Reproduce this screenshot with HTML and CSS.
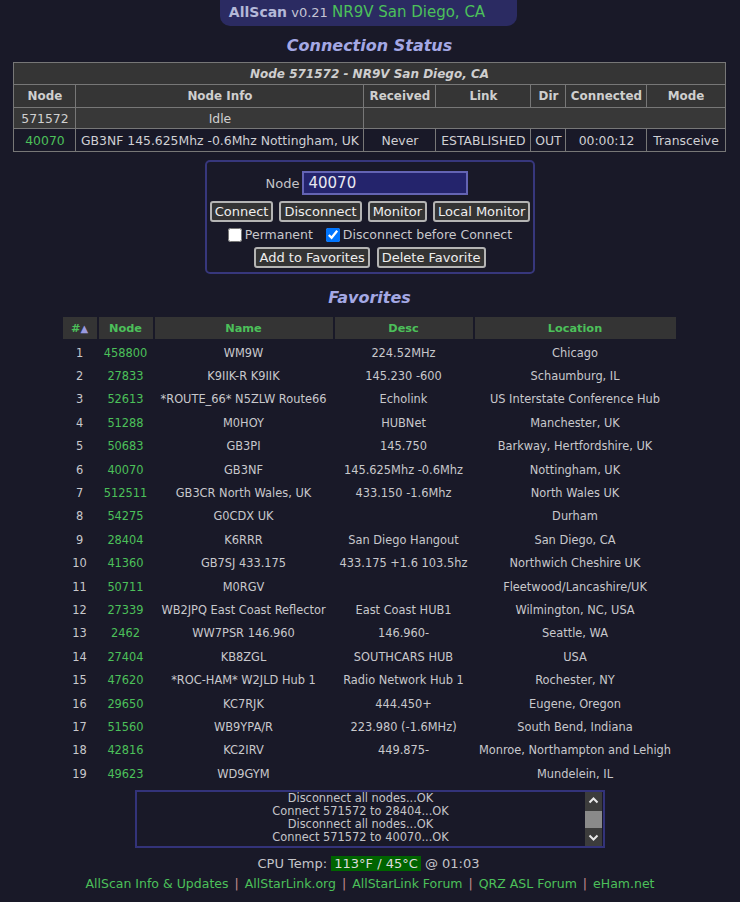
FILE: index.html
```html
<!DOCTYPE html>
<html>
<head>
<meta charset="utf-8">
<link rel="stylesheet" href="styles.css">
</head>
<body>
<div class="page">
  <div class="topbar"><span class="brand">AllScan</span> <span class="ver">v0.21</span> <span class="loc">NR9V San Diego, CA</span></div>
  <h2 class="title">Connection Status</h2>
  <table class="conn">
    <colgroup><col class="c1"><col class="c2"><col class="c3"><col class="c4"><col class="c5"><col class="c6"><col class="c7"></colgroup>
    <tr><th colspan="7" class="conn-title">Node 571572 - NR9V San Diego, CA</th></tr>
    <tr class="hdr"><th>Node</th><th>Node Info</th><th>Received</th><th>Link</th><th>Dir</th><th>Connected</th><th>Mode</th></tr>
    <tr class="self"><td>571572</td><td>Idle</td><td colspan="5"></td></tr>
    <tr class="link"><td class="green">40070</td><td>GB3NF 145.625Mhz -0.6Mhz Nottingham, UK</td><td>Never</td><td>ESTABLISHED</td><td>OUT</td><td>00:00:12</td><td>Transceive</td></tr>
  </table>

  <form class="ctl">
    <div class="row noderow"><label class="nlabel">Node</label><input class="ninput" type="text" value="40070"></div>
    <div class="row btns"><button type="button">Connect</button><button type="button">Disconnect</button><button type="button">Monitor</button><button type="button">Local Monitor</button></div>
    <div class="row checks"><label class="chk"><input type="checkbox">Permanent</label><label class="chk"><input type="checkbox" checked>Disconnect before Connect</label></div>
    <div class="row btns btns2"><button type="button">Add to Favorites</button><button type="button">Delete Favorite</button></div>
  </form>

  <h2 class="title fav-title">Favorites</h2>
  <table class="fav">
    <colgroup><col class="f1"><col class="f2"><col class="f3"><col class="f4"><col class="f5"></colgroup>
    <thead><tr><th>#<span class="tri">▲</span></th><th>Node</th><th>Name</th><th>Desc</th><th>Location</th></tr></thead>
    <tbody>
      <tr><td>1</td><td class="green">458800</td><td>WM9W</td><td>224.52MHz</td><td>Chicago</td></tr>
      <tr><td>2</td><td class="green">27833</td><td>K9IIK-R K9IIK</td><td>145.230 -600</td><td>Schaumburg, IL</td></tr>
      <tr><td>3</td><td class="green">52613</td><td>*ROUTE_66* N5ZLW Route66</td><td>Echolink</td><td>US Interstate Conference Hub</td></tr>
      <tr><td>4</td><td class="green">51288</td><td>M0HOY</td><td>HUBNet</td><td>Manchester, UK</td></tr>
      <tr><td>5</td><td class="green">50683</td><td>GB3PI</td><td>145.750</td><td>Barkway, Hertfordshire, UK</td></tr>
      <tr><td>6</td><td class="green">40070</td><td>GB3NF</td><td>145.625Mhz -0.6Mhz</td><td>Nottingham, UK</td></tr>
      <tr><td>7</td><td class="green">512511</td><td>GB3CR North Wales, UK</td><td>433.150 -1.6Mhz</td><td>North Wales UK</td></tr>
      <tr><td>8</td><td class="green">54275</td><td>G0CDX UK</td><td></td><td>Durham</td></tr>
      <tr><td>9</td><td class="green">28404</td><td>K6RRR</td><td>San Diego Hangout</td><td>San Diego, CA</td></tr>
      <tr><td>10</td><td class="green">41360</td><td>GB7SJ 433.175</td><td>433.175 +1.6 103.5hz</td><td>Northwich Cheshire UK</td></tr>
      <tr><td>11</td><td class="green">50711</td><td>M0RGV</td><td></td><td>Fleetwood/Lancashire/UK</td></tr>
      <tr><td>12</td><td class="green">27339</td><td>WB2JPQ East Coast Reflector</td><td>East Coast HUB1</td><td>Wilmington, NC, USA</td></tr>
      <tr><td>13</td><td class="green">2462</td><td>WW7PSR 146.960</td><td>146.960-</td><td>Seattle, WA</td></tr>
      <tr><td>14</td><td class="green">27404</td><td>KB8ZGL</td><td>SOUTHCARS HUB</td><td>USA</td></tr>
      <tr><td>15</td><td class="green">47620</td><td>*ROC-HAM* W2JLD Hub 1</td><td>Radio Network Hub 1</td><td>Rochester, NY</td></tr>
      <tr><td>16</td><td class="green">29650</td><td>KC7RJK</td><td>444.450+</td><td>Eugene, Oregon</td></tr>
      <tr><td>17</td><td class="green">51560</td><td>WB9YPA/R</td><td>223.980 (-1.6MHz)</td><td>South Bend, Indiana</td></tr>
      <tr><td>18</td><td class="green">42816</td><td>KC2IRV</td><td>449.875-</td><td>Monroe, Northampton and Lehigh</td></tr>
      <tr><td>19</td><td class="green">49623</td><td>WD9GYM</td><td></td><td>Mundelein, IL</td></tr>
    </tbody>
  </table>

  <div class="log">
    <div class="log-text">
      <div>Disconnect all nodes...OK</div>
      <div>Connect 571572 to 28404...OK</div>
      <div>Disconnect all nodes...OK</div>
      <div>Connect 571572 to 40070...OK</div>
    </div>
    <div class="sbar">
      <svg class="arr" width="17" height="17" viewBox="0 0 17 17"><path d="M4.5 10.5 L8.5 6.5 L12.5 10.5" fill="none" stroke="#e8e8e8" stroke-width="2"/></svg>
      <div class="track"><div class="thumb"></div></div>
      <svg class="arr" width="17" height="17" viewBox="0 0 17 17"><path d="M4.5 6.5 L8.5 10.5 L12.5 6.5" fill="none" stroke="#e8e8e8" stroke-width="2"/></svg>
    </div>
  </div>

  <div class="cpu">CPU Temp: <span class="temp">113°F / 45°C</span> @ 01:03</div>
  <div class="links"><a href="#">AllScan Info &amp; Updates</a><span class="sep">|</span><a href="#">AllStarLink.org</a><span class="sep">|</span><a href="#">AllStarLink Forum</a><span class="sep">|</span><a href="#">QRZ ASL Forum</a><span class="sep">|</span><a href="#">eHam.net</a></div>
</div>
</body>
</html>
```

FILE: styles.css
```css
html, body {
  margin: 0;
  padding: 0;
  background: #191928;
}
body {
  font-family: "DejaVu Sans", Verdana, sans-serif;
  font-size: 13px;
  color: #c8c8cc;
}
.page {
  width: 740px;
  display: flex;
  flex-direction: column;
  align-items: center;
}
.topbar {
  width: 297px;
  height: 26px;
  box-sizing: border-box;
  margin-left: -3px;
  background: #2b2b62;
  border-radius: 0 0 10px 10px;
  text-align: center;
  line-height: 25px;
  padding-right: 23px;
  white-space: nowrap;
}
.brand { font-weight: bold; color: #b4b8d8; font-size: 14px; }
.ver { color: #c4c4d4; font-size: 13px; }
.loc { color: #4cc05a; font-size: 15px; }
.title {
  margin: 10px 0 0 0;
  font-size: 16px;
  font-weight: bold;
  font-style: italic;
  color: #a4a8e4;
  line-height: 20px;
  margin-left: -1px;
}
.conn {
  margin-top: 6px;
  width: 711px;
  margin-left: -1px;
  table-layout: fixed;
  border-collapse: collapse;
  border: 1px solid #777;
  font-size: 12.4px;
}
.conn .c1 { width: 62px; }
.conn .c2 { width: 288px; }
.conn .c3 { width: 72px; }
.conn .c4 { width: 95px; }
.conn .c5 { width: 35px; }
.conn .c6 { width: 81px; }
.conn .c7 { width: 78px; }
.conn th, .conn td {
  border: 1px solid #777;
  padding: 0;
  text-align: center;
  white-space: nowrap;
  overflow: hidden;
}
.conn th {
  background: #353535;
  color: #cfcfcf;
  font-weight: bold;
  font-size: 11.9px;
}
.conn .conn-title {
  font-style: italic;
  font-size: 12px;
  height: 21px;
}
.conn .hdr th { height: 22px; }
.conn .self td { background: #383838; height: 20px; color: #d0d0d0; }
.conn .link td { height: 22px; color: #d0d0d4; }
.green { color: #4cc05a; }
.conn .link td.green { color: #4cc05a; }

.ctl {
  margin: 8px 0 0 0;
  width: 330px;
  height: 114px;
  box-sizing: border-box;
  border: 2px solid #37377c;
  border-radius: 5px;
  display: flex;
  flex-direction: column;
  align-items: center;
  padding-top: 9px;
}
.ctl .row {
  display: flex;
  align-items: center;
}
.noderow { gap: 3px; margin-right: 6px; }
.nlabel { color: #c4c4c8; font-size: 13px; }
.ninput {
  width: 166px;
  height: 24px;
  box-sizing: border-box;
  background: #24246c;
  border: 2px solid #6464b4;
  color: #e8e8f0;
  font-family: "DejaVu Sans", Verdana, sans-serif;
  font-size: 15px;
  padding: 0 4px;
  margin: 0;
  outline: none;
}
.btns { margin-top: 6px; gap: 6px; }
.btns2 { gap: 7px; }
.checks { margin-top: 3px; }
.checks + .btns { margin-top: 3px; }
button {
  font-family: "DejaVu Sans", Verdana, sans-serif;
  font-size: 13px;
  color: #eeeeee;
  background: #343434;
  border: 2px solid #b4b4b4;
  border-radius: 3px;
  padding: 0 3px;
  height: 21px;
  line-height: 15px;
  margin: 0;
}
.checks { gap: 13px; height: 19px; }
.chk {
  display: flex;
  align-items: center;
  color: #c8c8cc;
  font-size: 12.5px;
}
.chk input {
  margin: 0 3px 0 0;
  width: 14px;
  height: 14px;
}

.fav-title { margin-top: 14px; }
.fav {
  margin-top: 7px;
  border-spacing: 2px;
  margin-left: -2px;
  table-layout: fixed;
  width: 617px;
}
.fav .f1 { width: 34px; }
.fav .f2 { width: 54px; }
.fav .f3 { width: 178px; }
.fav .f4 { width: 138px; }
.fav .f5 { width: 201px; }
.fav th {
  background: #343434;
  color: #4cc05a;
  font-weight: bold;
  font-size: 11.3px;
  height: 22px;
  padding: 0;
}
.fav .tri { color: #9a9ae0; font-size: 10px; }
.fav td {
  text-align: center;
  height: 21.4px;
  padding: 0;
  font-size: 11.4px;
  color: #c8c8cc;
  white-space: nowrap;
}
.fav td.green { color: #4cc05a; }
.fav tbody tr:first-child td { padding-top: 1px; }

.log {
  margin-top: 4px;
  width: 470px;
  height: 58px;
  box-sizing: border-box;
  border: 2px solid #33337a;
  display: flex;
  margin-left: -1px;
}
.log-text {
  flex: 1;
  text-align: center;
  font-size: 11.4px;
  line-height: 13px;
  color: #c4c4c8;
}
.sbar {
  width: 17px;
  background: #3c3c3c;
  display: flex;
  flex-direction: column;
  margin-right: 1px;
}
.arr { display: block; flex: none; }
.track { flex: 1; display: flex; flex-direction: column; justify-content: center; }
.thumb { height: 17px; background: #8a8a8a; }

.cpu {
  margin-top: 8px;
  color: #c4c4c8;
  line-height: 16px;
  margin-left: -3px;
}
.temp {
  background: #006400;
  color: #dcdcdc;
  padding: 0 3px;
}
.links {
  margin-top: 4px;
  line-height: 16px;
  font-size: 12.5px;
}
.links a {
  color: #4cc05a;
  text-decoration: none;
}
.sep {
  color: #c49090;
  margin: 0 6px;
}
```
